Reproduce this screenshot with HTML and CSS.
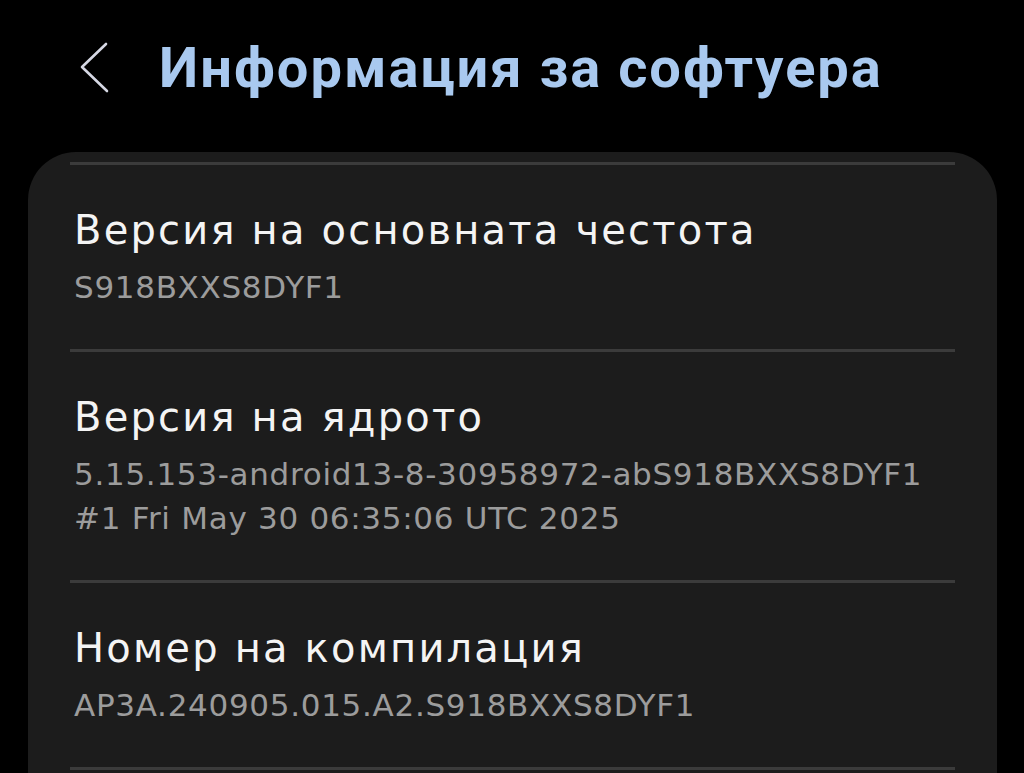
FILE: index.html
```html
<!DOCTYPE html>
<html lang="bg">
<head>
  <meta charset="UTF-8">
  <meta name="viewport" content="width=device-width, initial-scale=1.0">
  <title>Информация за софтуера</title>
  <link rel="stylesheet" href="styles.css">
</head>
<body>

<header class="app-bar">
  <svg class="back-icon" width="32" height="56" viewBox="0 0 32 56" aria-hidden="true">
    <polyline points="28,4 4,27 29,51" fill="none" stroke="#d6d8e4" stroke-width="2.6" stroke-linecap="round" stroke-linejoin="round"/>
  </svg>
  <h1 class="app-title">Информация за софтуера</h1>
</header>

<div class="card">
  <div class="item">
    <div class="item-title">Версия на основната честота</div>
    <div class="item-sub">S918BXXS8DYF1</div>
  </div>
  <div class="item">
    <div class="item-title">Версия на ядрото</div>
    <div class="item-sub">5.15.153-android13-8-30958972-abS918BXXS8DYF1<br>#1 Fri May 30 06:35:06 UTC 2025</div>
  </div>
  <div class="item">
    <div class="item-title">Номер на компилация</div>
    <div class="item-sub">AP3A.240905.015.A2.S918BXXS8DYF1</div>
  </div>
  <div class="item"></div>
</div>

</body>
</html>
```

FILE: styles.css
```css
body {
  margin: 0;
  padding: 0;
  background-color: #000;
  font-family: "DejaVu Sans", "Open Sans", sans-serif;
  overflow: hidden;
}
.app-bar {
  display: flex;
  align-items: center;
  gap: 49px;
  padding: 36px 0 0 78px;
  height: 64px;
}
.back-icon {
  flex: none;
}
.app-title {
  margin: 0;
  font-family: Roboto, "Noto Sans", sans-serif;
  font-weight: 700;
  font-size: 56px;
  line-height: 64px;
  letter-spacing: 2px;
  color: #a9c9ef;
}
.card {
  margin: 52px 0 0 28px;
  width: 969px;
  background-color: #1c1c1c;
  border-radius: 48px;
  padding: 10px 42px 0 42px;
  box-sizing: border-box;
  min-height: 700px;
}
.item {
  border-top: 3px solid #3b3b3b;
  padding: 39px 4px 40px 4px;
}
.item-title {
  font-size: 40px;
  line-height: 52px;
  letter-spacing: 2.2px;
  color: #f4f4f4;
}
.item-sub {
  margin-top: 9px;
  font-size: 31px;
  line-height: 44px;
  letter-spacing: 0.7px;
  color: #9c9c9c;
}
```
